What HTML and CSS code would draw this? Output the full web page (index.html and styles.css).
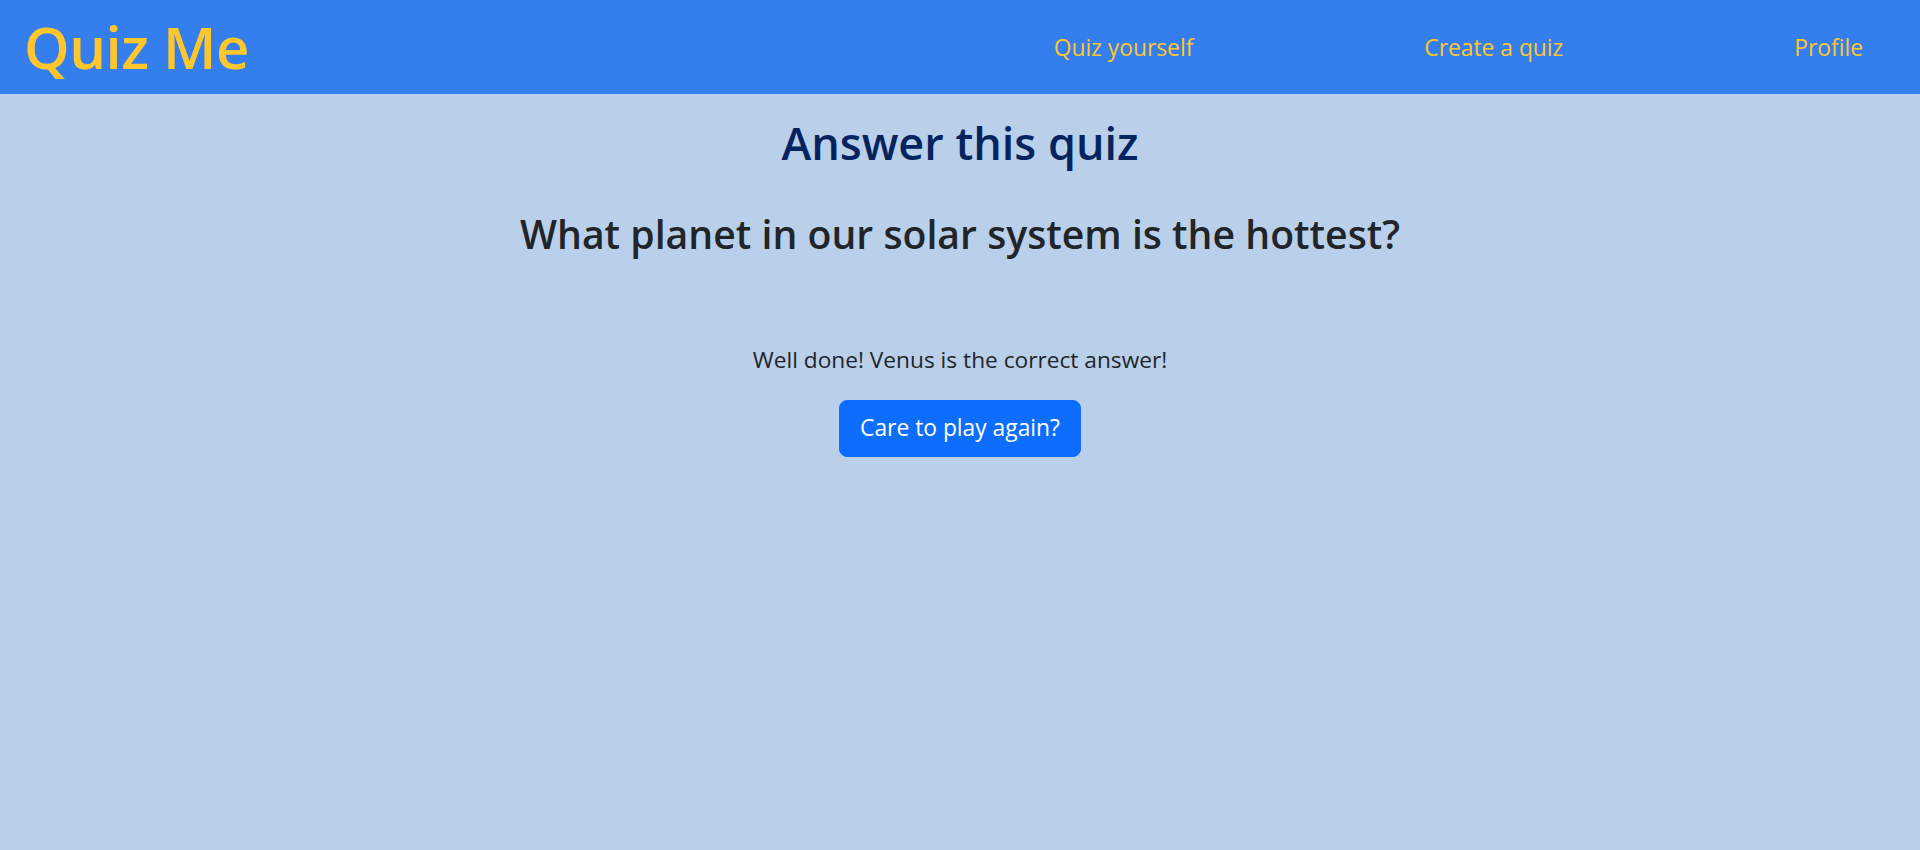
FILE: index.html
```html
<!DOCTYPE html>
<html lang="en">
<head>
<meta charset="utf-8">
<title>Quiz Me</title>
<link rel="stylesheet" href="styles.css">
</head>
<body>
<header class="topbar">
  <a class="brand" href="#">Quiz Me</a>
  <nav class="nav">
    <a class="nav-link" href="#">Quiz yourself</a>
    <a class="nav-link" href="#">Create a quiz</a>
    <a class="nav-link" href="#">Profile</a>
  </nav>
</header>
<main class="content">
  <h1 class="title">Answer this quiz</h1>
  <h2 class="question">What planet in our solar system is the hottest?</h2>
  <p class="result">Well done! Venus is the correct answer!</p>
  <button class="btn-again" type="button">Care to play again?</button>
</main>
</body>
</html>
```

FILE: styles.css
```css
* { box-sizing: border-box; }
html, body { margin: 0; padding: 0; }
body {
  background: #bad0ea;
  font-family: "Open Sans", "Noto Sans", sans-serif;
  color: #212529;
  min-height: 850px;
}
.topbar {
  height: 94px;
  background: #357eed;
  display: flex;
  align-items: center;
  padding: 0 57px 0 24px;
}
.brand {
  color: #ffc72c;
  text-decoration: none;
  font-size: 58px;
  font-weight: 600;
  line-height: 1;
  letter-spacing: -0.5px;
}
.nav {
  margin-left: auto;
  display: flex;
  gap: 231px;
  padding-top: 2px;
}
.nav-link {
  color: #ffc72c;
  text-decoration: none;
  font-size: 22.8px;
  line-height: 1.5;
}
.content {
  display: flex;
  flex-direction: column;
  align-items: center;
  text-align: center;
}
.title {
  margin: 22px 0 0;
  font-size: 45px;
  font-weight: 600;
  line-height: 1.2;
  color: #04245f;
}
.question {
  margin: 40px 0 0;
  font-size: 39.2px;
  font-weight: 600;
  line-height: 1.2;
  color: #212529;
}
.result {
  margin: 86px 0 0;
  font-size: 22.7px;
  line-height: 1.5;
}
.btn-again {
  margin-top: 23px;
  width: 242px;
  height: 57px;
  border: 1px solid #0d6efd;
  border-radius: 8px;
  background: #0d6efd;
  color: #fff;
  font-family: inherit;
  font-size: 22.8px;
  line-height: 1.5;
  cursor: pointer;
}
```
